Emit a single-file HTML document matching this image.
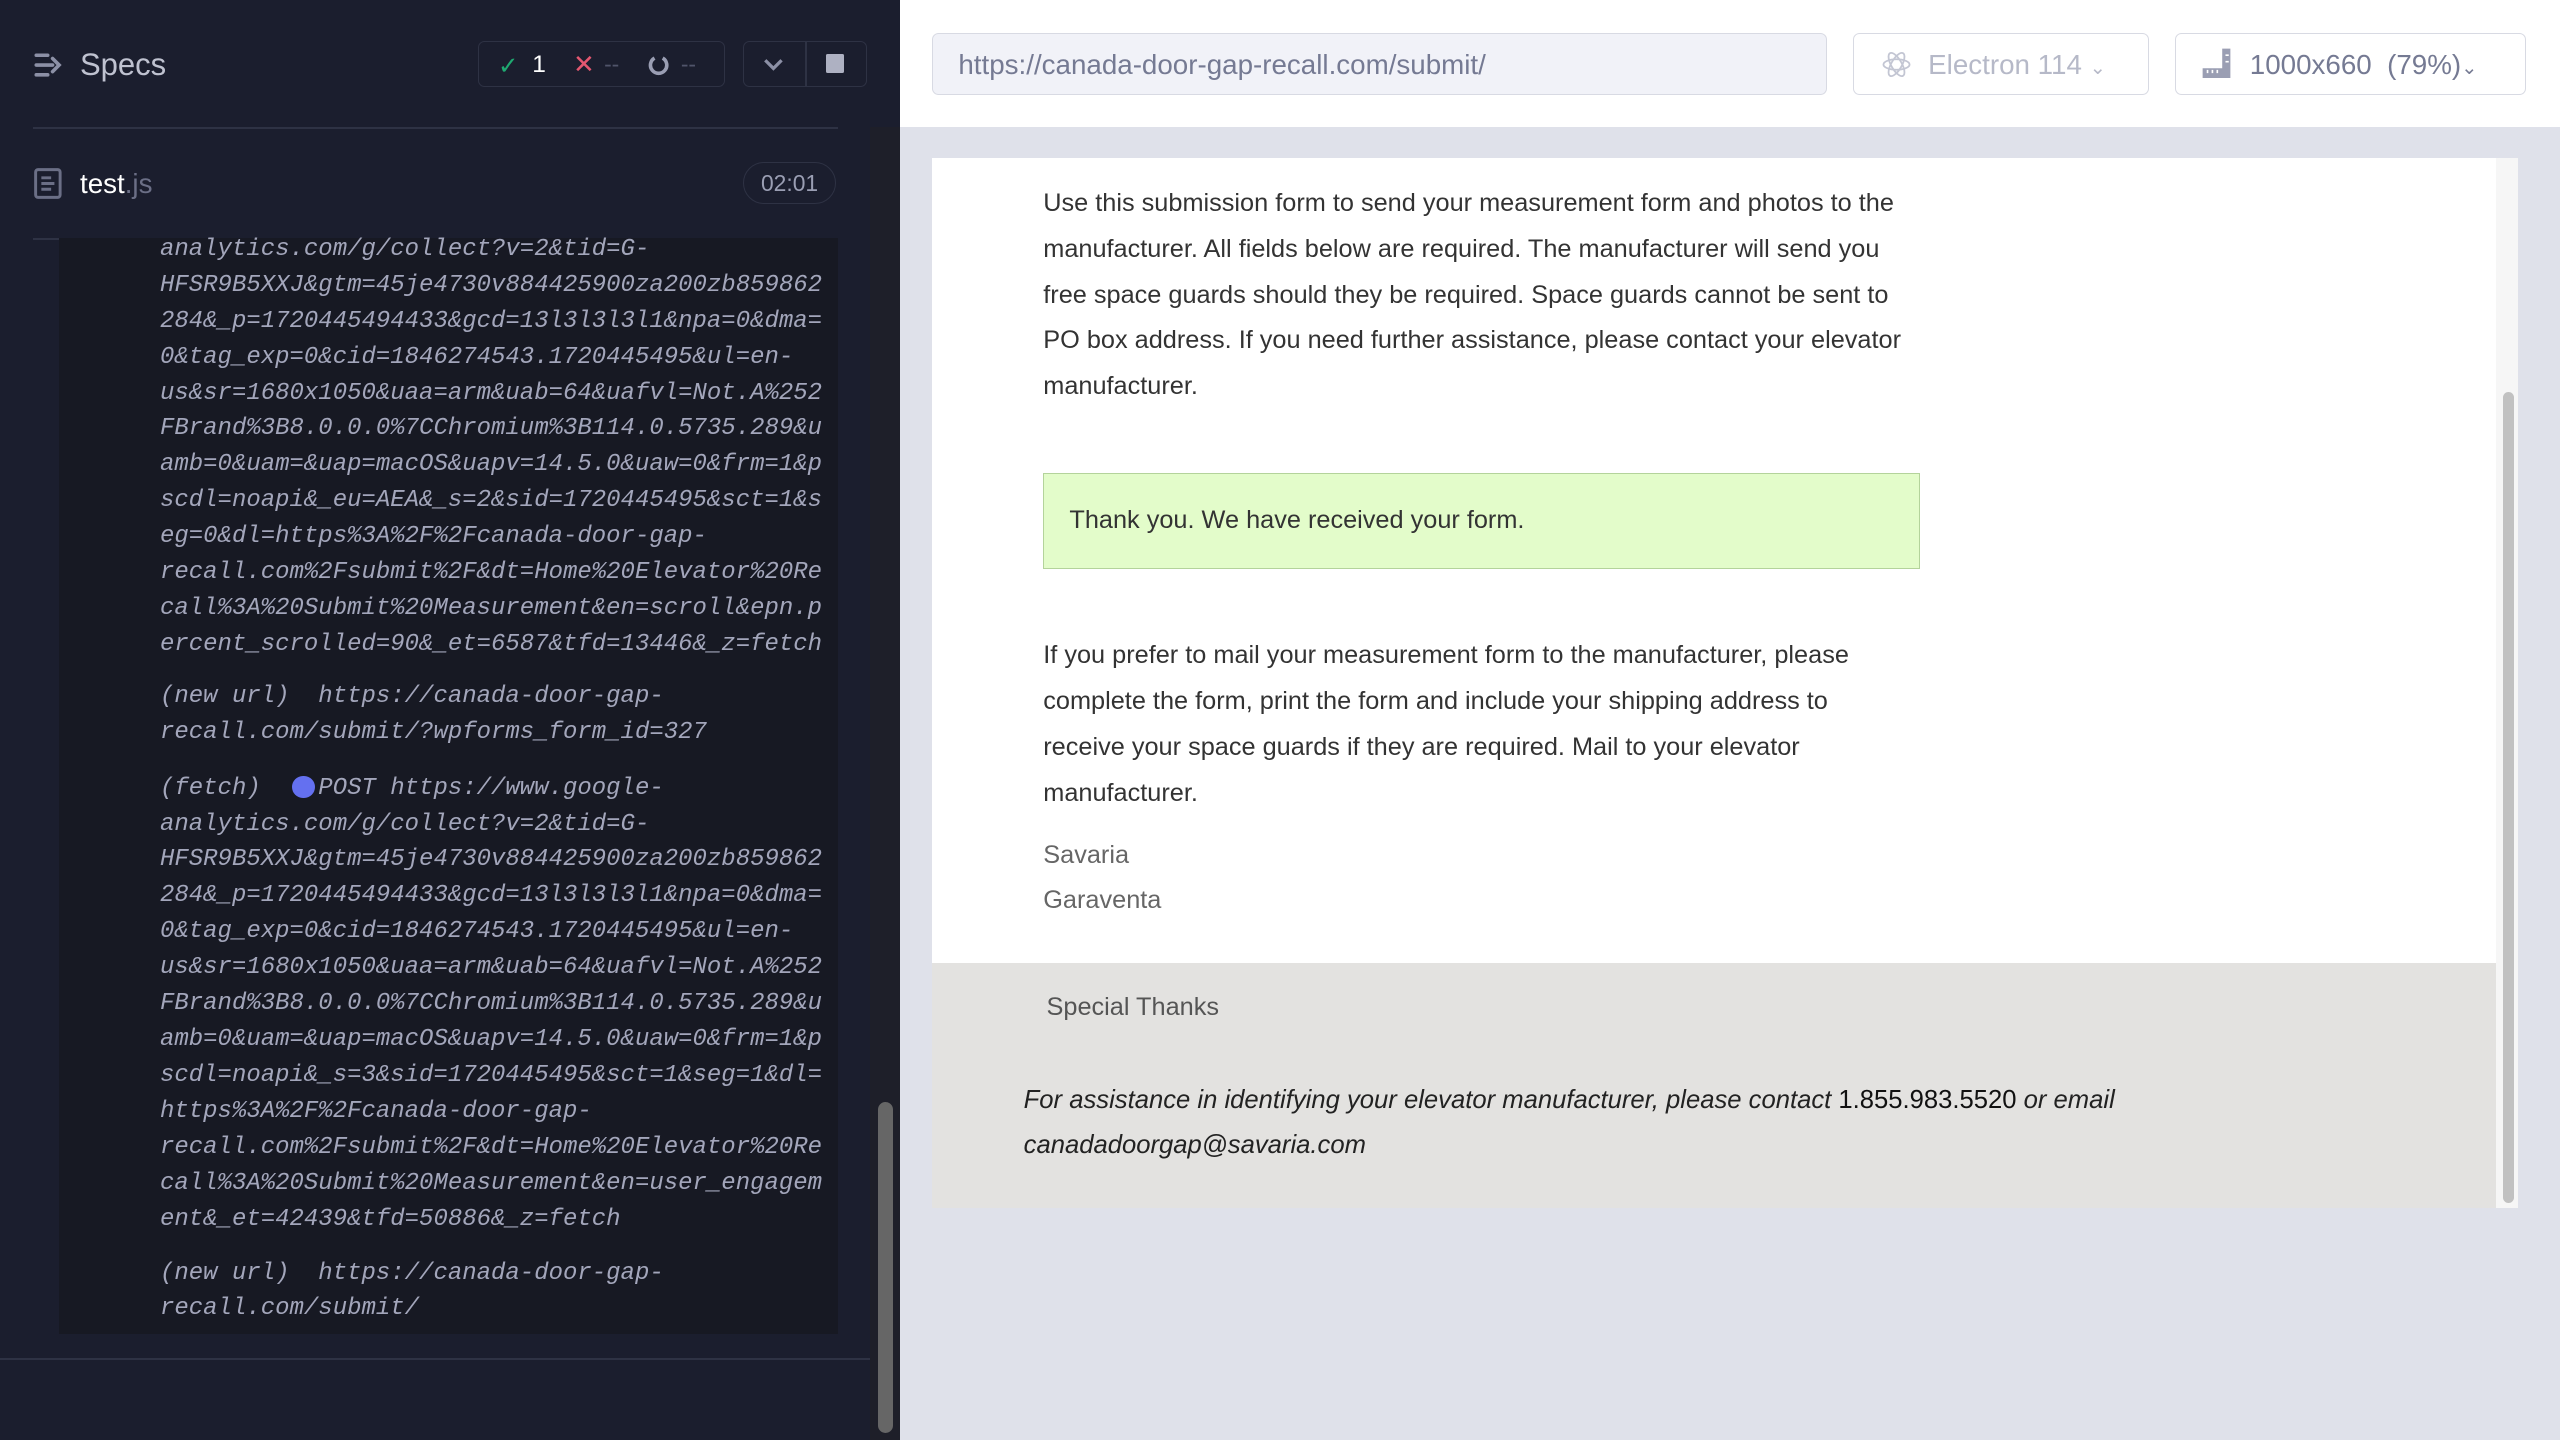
<!DOCTYPE html>
<html><head><meta charset="utf-8"><style>
html,body{margin:0;padding:0;width:2560px;height:1440px;overflow:hidden;background:#dfe1ea}
#w{zoom:1.63265;width:1568px;height:882px;position:relative;font-family:"Liberation Sans",sans-serif}
.a{position:absolute}
#left{left:0;top:0;width:551px;height:882px;background:#1b1e2e}
.code{left:36px;top:146px;width:477px;height:671px;background:#171923}
.ln{position:absolute;left:98px;font-family:"Liberation Mono",monospace;font-style:italic;font-size:14.7px;color:#a3a6bb;white-space:pre;line-height:22px}
.p{position:absolute;left:639px;font-size:15.5px;color:#333;line-height:28px;white-space:pre}
</style></head><body><div id="w">
<div id="left" class="a">
  <svg class="a" style="left:20px;top:32px" width="19" height="16" viewBox="0 0 19 16"><g stroke="#8c90a6" stroke-width="2.2" stroke-linecap="round" fill="none"><path d="M2 2h7M2 8h10M2 14h7M12 4l4 4-4 4"/></g></svg>
  <div class="a" style="left:49px;top:29px;font-size:19px;color:#bfc2d0">Specs</div>
  <div class="a" style="left:293px;top:25px;width:150px;height:27px;border:1px solid #2e3244;border-radius:4px"></div>
  <div class="a" style="left:305px;top:31px;font-size:15px;color:#1fa971">✓</div>
  <div class="a" style="left:326px;top:31px;font-size:15px;color:#fff">1</div>
  <div class="a" style="left:351px;top:30px;font-size:16px;color:#e45770">✕</div>
  <div class="a" style="left:370px;top:31px;font-size:14px;color:#50546a">--</div>
  <svg class="a" style="left:397px;top:33px" width="13" height="14" viewBox="0 0 13 14"><path d="M4 2.5A5 5 0 1 0 9 2.5" stroke="#9a9eb3" stroke-width="2.2" fill="none"/></svg>
  <div class="a" style="left:417px;top:31px;font-size:14px;color:#50546a">--</div>
  <div class="a" style="left:455px;top:25px;width:75px;height:27px;border:1px solid #2e3244;border-radius:4px"></div>
  <div class="a" style="left:493px;top:26px;width:1px;height:27px;background:#2e3244"></div>
  <svg class="a" style="left:467px;top:35px" width="14" height="9" viewBox="0 0 14 9"><path d="M2 2l5 5 5-5" stroke="#8c90a6" stroke-width="2" fill="none"/></svg>
  <div class="a" style="left:506px;top:33px;width:11px;height:12px;background:#aeb1c2;border-radius:1px"></div>
  <div class="a" style="left:20px;top:78px;width:493px;height:1px;background:#2e3244"></div>
  <svg class="a" style="left:21px;top:103px" width="17" height="19" viewBox="0 0 17 19"><rect x="1" y="1" width="15" height="17" rx="1.5" fill="none" stroke="#6b6f86" stroke-width="1.8"/><path d="M4.5 6h6M4.5 9.5h8M4.5 13h6" stroke="#6b6f86" stroke-width="1.8"/></svg>
  <div class="a" style="left:49px;top:103px;font-size:17px;color:#fff">test<span style="color:#6b6f86">.js</span></div>
  <div class="a" style="left:455px;top:99px;width:56px;height:25px;border:1px solid #2e3244;border-radius:13px;color:#9a9eb3;font-size:14px;text-align:center;line-height:25px">02:01</div>
  <div class="a" style="left:20px;top:146px;width:493px;height:1px;background:#2e3244"></div>
  <div class="a code"></div>
  <div class="ln" style="top:142px">analytics.com/g/collect?v=2&amp;tid=G-
HFSR9B5XXJ&amp;gtm=45je4730v884425900za200zb859862
284&amp;_p=1720445494433&amp;gcd=13l3l3l3l1&amp;npa=0&amp;dma=
0&amp;tag_exp=0&amp;cid=1846274543.1720445495&amp;ul=en-
us&amp;sr=1680x1050&amp;uaa=arm&amp;uab=64&amp;uafvl=Not.A%252
FBrand%3B8.0.0.0%7CChromium%3B114.0.5735.289&amp;u
amb=0&amp;uam=&amp;uap=macOS&amp;uapv=14.5.0&amp;uaw=0&amp;frm=1&amp;p
scdl=noapi&amp;_eu=AEA&amp;_s=2&amp;sid=1720445495&amp;sct=1&amp;s
eg=0&amp;dl=https%3A%2F%2Fcanada-door-gap-
recall.com%2Fsubmit%2F&amp;dt=Home%20Elevator%20Re
call%3A%20Submit%20Measurement&amp;en=scroll&amp;epn.p
ercent_scrolled=90&amp;_et=6587&amp;tfd=13446&amp;_z=fetch</div>
  <div class="ln" style="top:416px">(new url)  https://canada-door-gap-
recall.com/submit/?wpforms_form_id=327</div>
  <div class="ln" style="top:472px">(fetch)    POST https://www.google-
analytics.com/g/collect?v=2&amp;tid=G-
HFSR9B5XXJ&amp;gtm=45je4730v884425900za200zb859862
284&amp;_p=1720445494433&amp;gcd=13l3l3l3l1&amp;npa=0&amp;dma=
0&amp;tag_exp=0&amp;cid=1846274543.1720445495&amp;ul=en-
us&amp;sr=1680x1050&amp;uaa=arm&amp;uab=64&amp;uafvl=Not.A%252
FBrand%3B8.0.0.0%7CChromium%3B114.0.5735.289&amp;u
amb=0&amp;uam=&amp;uap=macOS&amp;uapv=14.5.0&amp;uaw=0&amp;frm=1&amp;p
scdl=noapi&amp;_s=3&amp;sid=1720445495&amp;sct=1&amp;seg=1&amp;dl=
https%3A%2F%2Fcanada-door-gap-
recall.com%2Fsubmit%2F&amp;dt=Home%20Elevator%20Re
call%3A%20Submit%20Measurement&amp;en=user_engagem
ent&amp;_et=42439&amp;tfd=50886&amp;_z=fetch</div>
  <div class="a" style="left:179px;top:475px;width:14px;height:14px;border-radius:50%;background:#6470f0"></div>
  <div class="ln" style="top:769px">(new url)  https://canada-door-gap-
recall.com/submit/</div>
  <div class="a" style="left:0;top:832px;width:533px;height:1px;background:#2e3244"></div>
  <div class="a" style="left:533px;top:78px;width:18px;height:804px;background:#1e1f29"></div>
  <div class="a" style="left:538px;top:675px;width:9px;height:203px;background:#666;border-radius:5px"></div>
</div>
<div class="a" style="left:551px;top:0;width:1017px;height:78px;background:#fff"></div>
<div class="a" style="left:571px;top:20px;width:547px;height:37px;background:#f1f2f8;border:1px solid #d8dae3;border-radius:4px"></div>
<div class="a" style="left:587px;top:30px;font-size:17px;color:#757a93">https://canada-door-gap-recall.com/submit/</div>
<div class="a" style="left:1135px;top:20px;width:180px;height:37px;border:1px solid #d8dae3;border-radius:4px"></div>
<svg class="a" style="left:1152px;top:30px" width="19" height="19" viewBox="0 0 19 19"><g fill="none" stroke="#c3c6d3" stroke-width="1.1"><ellipse cx="9.5" cy="9.5" rx="8" ry="3.2"/><ellipse cx="9.5" cy="9.5" rx="8" ry="3.2" transform="rotate(60 9.5 9.5)"/><ellipse cx="9.5" cy="9.5" rx="8" ry="3.2" transform="rotate(120 9.5 9.5)"/></g></svg>
<div class="a" style="left:1181px;top:30px;font-size:17px;color:#b6b9c8">Electron 114 <span style="font-size:12px">⌄</span></div>
<div class="a" style="left:1332px;top:20px;width:214px;height:37px;border:1px solid #d8dae3;border-radius:4px"></div>
<svg class="a" style="left:1348px;top:29px" width="20" height="20" viewBox="0 0 20 20"><path d="M13 1h5v18H1v-6h12z" fill="#9a9eb3"/><path d="M4 16v-2M7 16v-2M10 16v-2M15 5h2M15 9h2" stroke="#fff" stroke-width="1"/></svg>
<div class="a" style="left:1378px;top:30px;font-size:17px;color:#757a93;white-space:pre">1000x660  (79%)<span style="font-size:12px">⌄</span></div>
<div class="a" style="left:571px;top:97px;width:971px;height:643px;background:#fff"></div>
<div class="a" style="left:571px;top:590px;width:958px;height:150px;background:#e3e2e0"></div>
<div class="a" style="left:1529px;top:97px;width:13px;height:643px;background:#f6f6f6"></div>
<div class="a" style="left:1533px;top:240px;width:7px;height:497px;background:#c1c1c1;border-radius:4px"></div>
<div class="p" style="top:111px">Use this submission form to send your measurement form and photos to the
manufacturer. All fields below are required. The manufacturer will send you
free space guards should they be required. Space guards cannot be sent to
PO box address. If you need further assistance, please contact your elevator
manufacturer.</div>
<div class="a" style="left:639px;top:290px;width:536px;height:57px;background:#e3fcca;border:1px solid #b4d39b"></div>
<div class="p" style="left:655px;top:305px">Thank you. We have received your form.</div>
<div class="p" style="top:388px">If you prefer to mail your measurement form to the manufacturer, please
complete the form, print the form and include your shipping address to
receive your space guards if they are required. Mail to your elevator
manufacturer.</div>
<div class="p" style="top:510px;color:#666">Savaria
Garaventa</div>
<div class="a" style="left:641px;top:608px;font-size:15.5px;color:#555">Special Thanks</div>
<div class="p" style="left:627px;top:660px;font-style:italic;color:#222;font-size:15.7px">For assistance in identifying your elevator manufacturer, please contact <span style="font-style:normal;color:#111">1.855.983.5520</span> or email
canadadoorgap@savaria.com</div>
</div></body></html>
